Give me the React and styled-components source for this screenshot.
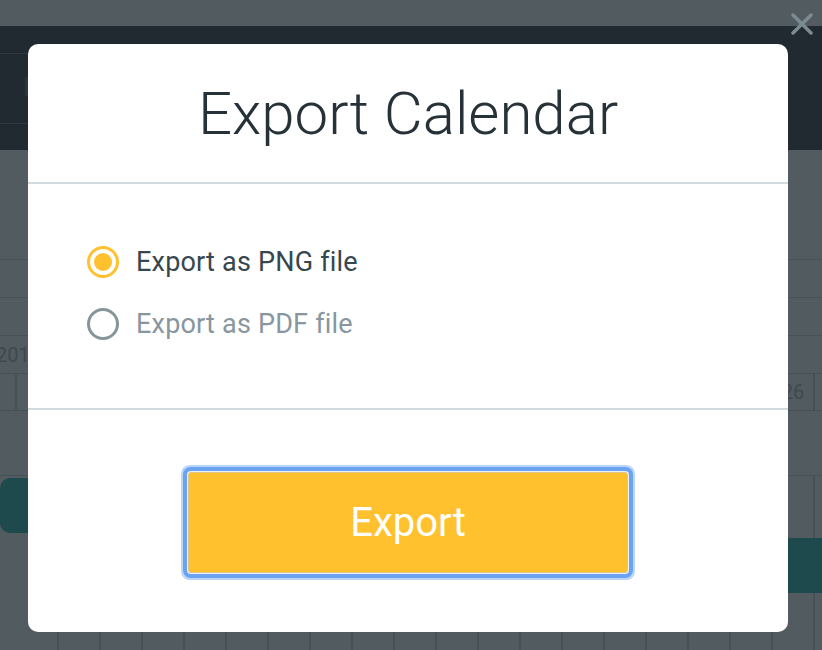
import React, { useState } from 'react'
import styled, { createGlobalStyle } from 'styled-components'

const GlobalStyle = createGlobalStyle`
  * { box-sizing: border-box; }
  html, body { margin: 0; padding: 0; }
  body {
    font-family: Roboto, "Noto Sans", "Liberation Sans", sans-serif;
    background: #ffffff;
    overflow: hidden;
  }
`

const days = Array.from({ length: 21 }, (_, i) => i + 7)

const App = () => {
  const [format, setFormat] = useState('png')

  return (
    <>
      <GlobalStyle />
      <Page>
        {/* background app, dimmed by the overlay */}
        <TopStrip />
        <Header>
          <SearchBox>
            <SearchIcon />
          </SearchBox>
        </Header>
        <Calendar>
          <HeadRow />
          <HeadRow />
          <YearRow>
            <YearLabel>2017</YearLabel>
          </YearRow>
          <DayRow>
            {days.map((d) => (
              <DayCell key={d}>{d}</DayCell>
            ))}
          </DayRow>
          <Timeline>
            <Bar $width="260px" />
            <Bar $width="420px" $offset="560px" />
          </Timeline>
        </Calendar>
      </Page>

      <Overlay>
        <CloseButton aria-label="Close">
          <svg width="22" height="22" viewBox="0 0 22 22">
            <path d="M2 2 L20 20 M20 2 L2 20" stroke="#7c8b92" strokeWidth="3.5" strokeLinecap="round" />
          </svg>
        </CloseButton>
        <Modal>
          <ModalHeader>
            <Title>Export Calendar</Title>
          </ModalHeader>
          <ModalBody>
            <Option $active={format === 'png'} onClick={() => setFormat('png')}>
              <Radio $checked={format === 'png'} />
              Export as PNG file
            </Option>
            <Option $active={format === 'pdf'} onClick={() => setFormat('pdf')}>
              <Radio $checked={format === 'pdf'} />
              Export as PDF file
            </Option>
          </ModalBody>
          <ModalFooter>
            <ExportButton>Export</ExportButton>
          </ModalFooter>
        </Modal>
      </Overlay>
    </>
  )
}

export default App

const Page = styled.div`
  height: 100vh;
  overflow: hidden;
  background: #ffffff;
  display: flex;
  flex-direction: column;
`
const TopStrip = styled.div`
  flex: 0 0 26px;
  background: #ffffff;
`
const Header = styled.div`
  flex: 0 0 124px;
  background: #0a0a10;
  padding-top: 27px;
`
const SearchBox = styled.div`
  width: 420px;
  height: 71px;
  border-top: 1px solid #4a565c;
  border-bottom: 1px solid #4a565c;
  display: flex;
  align-items: center;
  padding-left: 25px;
`
const SearchIcon = styled.div`
  width: 12px;
  height: 19px;
  margin-top: -4px;
  background: #3a454b;
`
const Calendar = styled.div`
  flex: 1;
  min-height: 0;
  display: flex;
  flex-direction: column;
  padding-top: 109px;
`
const HeadRow = styled.div`
  flex: 0 0 38px;
  border-top: 1px solid #c5cbd0;
`
const YearRow = styled.div`
  flex: 0 0 38px;
  border-top: 1px solid #c5cbd0;
  display: flex;
  align-items: center;
`
const YearLabel = styled.span`
  margin-left: -4px;
  font-size: 20px;
  color: #9ea2a8;
`
const DayRow = styled.div`
  display: flex;
  flex: 0 0 38px;
  margin-left: -25px;
  border-top: 1px solid #c5cbd0;
  border-bottom: 1px solid #c5cbd0;
`
const DayCell = styled.div`
  flex: 0 0 42px;
  border-right: 2px solid #c5cbd0;
  display: flex;
  align-items: center;
  justify-content: center;
  font-size: 20px;
  color: #9ea2a8;
`
const Timeline = styled.div`
  flex: 1;
  margin-top: 64px;
  border-top: 1px solid #c5cbd0;
  padding-top: 2px;
  background-image: repeating-linear-gradient(
    to right,
    transparent 0,
    transparent 40px,
    #c5cbd0 40px,
    #c5cbd0 42px
  );
  background-position: 17px 0;
  display: flex;
  flex-direction: column;
  gap: 5px;
`
const Bar = styled.div`
  flex: 0 0 55px;
  width: ${(p) => p.$width};
  margin-left: ${(p) => p.$offset || '0'};
  border-radius: 10px;
  background: #03aaa1;
`
const Overlay = styled.div`
  position: fixed;
  inset: 0;
  background: rgba(38, 50, 56, 0.8);
  display: flex;
  padding: 44px 34px 18px 28px;
`
const CloseButton = styled.button`
  position: absolute;
  top: 13px;
  right: 9px;
  width: 22px;
  height: 22px;
  padding: 0;
  border: none;
  background: none;
  cursor: pointer;
  display: flex;
`
const Modal = styled.div`
  flex: 1;
  background: #ffffff;
  border-radius: 10px;
  display: flex;
  flex-direction: column;
`
const ModalHeader = styled.div`
  height: 140px;
  border-bottom: 2px solid #d2dbdf;
  display: flex;
  align-items: center;
  justify-content: center;
`
const Title = styled.h1`
  margin: 0;
  font-size: 60px;
  font-weight: 300;
  color: #263238;
`
const ModalBody = styled.div`
  height: 226px;
  border-bottom: 2px solid #d2dbdf;
  padding: 58px 59px 0;
  display: flex;
  flex-direction: column;
  gap: 22px;
`
const Option = styled.label`
  display: flex;
  align-items: center;
  gap: 17px;
  height: 40px;
  font-size: 27px;
  letter-spacing: 0.2px;
  color: ${(p) => (p.$active ? '#37474f' : '#8896a0')};
  cursor: pointer;
`
const Radio = styled.span`
  width: 32px;
  height: 32px;
  border-radius: 50%;
  border: 3px solid ${(p) => (p.$checked ? '#ffc12e' : '#86949c')};
  display: flex;
  align-items: center;
  justify-content: center;
  &::after {
    content: '';
    width: 18px;
    height: 18px;
    border-radius: 50%;
    background: ${(p) => (p.$checked ? '#ffc12e' : 'transparent')};
  }
`
const ModalFooter = styled.div`
  flex: 1;
  display: flex;
  justify-content: center;
  padding-top: 62px;
`
const ExportButton = styled.button`
  width: 440px;
  height: 101px;
  border: 1px solid #e0c58a;
  border-radius: 3px;
  background: #ffc12e;
  color: #ffffff;
  font-family: Roboto, "Noto Sans", sans-serif;
  font-size: 40px;
  cursor: pointer;
  box-shadow: 0 0 0 1px #eef2f7, 0 0 0 5px #6aa3f1, 0 0 0 7px #bcd5f7;
`
